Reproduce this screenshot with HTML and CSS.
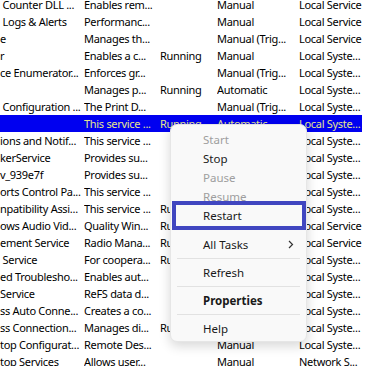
FILE: index.html
```html
<!DOCTYPE html>
<html>
<head>
<meta charset="utf-8">
<link rel="stylesheet" href="styles.css">
</head>
<body>
<div class="list">
  <div class="row"><span class="c name"> Counter DLL ...</span><span class="c">Enables rem...</span><span class="c"></span><span class="c">Manual</span><span class="c">Local Service</span></div>
  <div class="row"><span class="c name"> Logs &amp; Alerts</span><span class="c">Performanc...</span><span class="c"></span><span class="c">Manual</span><span class="c">Local Service</span></div>
  <div class="row"><span class="c name">e</span><span class="c">Manages th...</span><span class="c"></span><span class="c">Manual (Trig...</span><span class="c">Local Service</span></div>
  <div class="row"><span class="c name">r</span><span class="c">Enables a c...</span><span class="c">Running</span><span class="c">Manual</span><span class="c">Local Syste...</span></div>
  <div class="row"><span class="c name">ce Enumerator...</span><span class="c">Enforces gr...</span><span class="c"></span><span class="c">Manual (Trig...</span><span class="c">Local Syste...</span></div>
  <div class="row"><span class="c name"></span><span class="c">Manages p...</span><span class="c">Running</span><span class="c">Automatic</span><span class="c">Local Syste...</span></div>
  <div class="row"><span class="c name"> Configuration ...</span><span class="c">The Print D...</span><span class="c"></span><span class="c">Manual (Trig...</span><span class="c">Local Syste...</span></div>
  <div class="row sel"><span class="c name"></span><span class="c">This service ...</span><span class="c">Running</span><span class="c">Automatic</span><span class="c">Local Syste...</span></div>
  <div class="row"><span class="c name">ions and Notif...</span><span class="c">This service ...</span><span class="c"></span><span class="c">Manual</span><span class="c">Local Syste...</span></div>
  <div class="row"><span class="c name">kerService</span><span class="c">Provides su...</span><span class="c"></span><span class="c">Manual</span><span class="c">Local Syste...</span></div>
  <div class="row"><span class="c name">v_939e7f</span><span class="c">Provides su...</span><span class="c"></span><span class="c">Manual</span><span class="c">Local Syste...</span></div>
  <div class="row"><span class="c name">orts Control Pa...</span><span class="c">This service ...</span><span class="c"></span><span class="c">Manual</span><span class="c">Local Syste...</span></div>
  <div class="row"><span class="c name">npatibility Assi...</span><span class="c">This service ...</span><span class="c">Running</span><span class="c">Manual</span><span class="c">Local Syste...</span></div>
  <div class="row"><span class="c name">ows Audio Vid...</span><span class="c">Quality Win...</span><span class="c">Running</span><span class="c">Manual</span><span class="c">Local Service</span></div>
  <div class="row"><span class="c name">ement Service</span><span class="c">Radio Mana...</span><span class="c">Running</span><span class="c">Manual</span><span class="c">Local Service</span></div>
  <div class="row"><span class="c name"> Service</span><span class="c">For coopera...</span><span class="c">Running</span><span class="c">Automatic</span><span class="c">Local Syste...</span></div>
  <div class="row"><span class="c name">ed Troublesho...</span><span class="c">Enables aut...</span><span class="c"></span><span class="c">Manual</span><span class="c">Local Syste...</span></div>
  <div class="row"><span class="c name">Service</span><span class="c">ReFS data d...</span><span class="c"></span><span class="c">Manual</span><span class="c">Local Syste...</span></div>
  <div class="row"><span class="c name">ss Auto Conne...</span><span class="c">Creates a co...</span><span class="c"></span><span class="c">Manual</span><span class="c">Local Syste...</span></div>
  <div class="row"><span class="c name">ss Connection...</span><span class="c">Manages di...</span><span class="c">Running</span><span class="c">Manual</span><span class="c">Local Syste...</span></div>
  <div class="row"><span class="c name">top Configurat...</span><span class="c">Remote Des...</span><span class="c"></span><span class="c">Manual</span><span class="c">Local Syste...</span></div>
  <div class="row"><span class="c name">top Services</span><span class="c">Allows user...</span><span class="c"></span><span class="c">Manual</span><span class="c">Network S...</span></div>
</div>

<div class="menu">
  <div class="item dis">Start</div>
  <div class="item">Stop</div>
  <div class="item dis">Pause</div>
  <div class="item dis">Resume</div>
  <div class="item">Restart</div>
  <div class="sep first"></div>
  <div class="item sub">All Tasks<svg class="chev" width="6" height="9" viewBox="0 0 6 9"><path d="M1 1 L4.5 4.5 L1 8" fill="none" stroke="#333" stroke-width="1.2"/></svg></div>
  <div class="sep"></div>
  <div class="item">Refresh</div>
  <div class="sep"></div>
  <div class="item bold">Properties</div>
  <div class="sep"></div>
  <div class="item">Help</div>
</div>
<div class="mark"></div>
</body>
</html>
```

FILE: styles.css
```css
html, body {
  margin: 0;
  padding: 0;
  background: #ffffff;
}
body {
  width: 375px;
  height: 366px;
  overflow: hidden;
  font-family: "Noto Sans", "Open Sans", sans-serif;
  font-size: 11px;
  color: #000;
  position: relative;
}
.list {
  display: flex;
  flex-direction: column;
  margin-top: -4px;
  letter-spacing: -0.3px;
}
.row {
  display: grid;
  grid-template-columns: 84px 76px 57px 82px 63px;
  width: 362px;
  height: 17px;
  line-height: 17px;
}
.c {
  white-space: pre;
  overflow: hidden;
}
.row.sel {
  background: #0000f0;
  color: #e4e48e;
}
.menu {
  position: absolute;
  left: 170px;
  top: 124px;
  width: 137px;
  padding: 5px 0 3px;
  background: #f9f9f9;
  border: 1px solid #e6e6e6;
  border-radius: 7px;
  box-shadow: 0 4px 12px rgba(0,0,0,0.16);
  box-sizing: border-box;
  display: flex;
  flex-direction: column;
  font-size: 11.5px;
  color: #1a1a1a;
}
.item {
  height: 19px;
  line-height: 19px;
  padding-left: 32px;
  display: flex;
  align-items: center;
  justify-content: space-between;
  padding-right: 12px;
}
.item.dis {
  color: #9e9e9e;
}
.item.bold {
  font-weight: 700;
}
.sep {
  height: 1px;
  background: #e2e2e2;
  margin: 4px 6px 4px 6px;
}
.sep.first {
  margin-bottom: 5px;
}
.chev {
  display: block;
}
.mark {
  position: absolute;
  left: 172px;
  top: 201px;
  width: 134px;
  height: 29px;
  box-sizing: border-box;
  border: 4px solid #4046c0;
}
```
